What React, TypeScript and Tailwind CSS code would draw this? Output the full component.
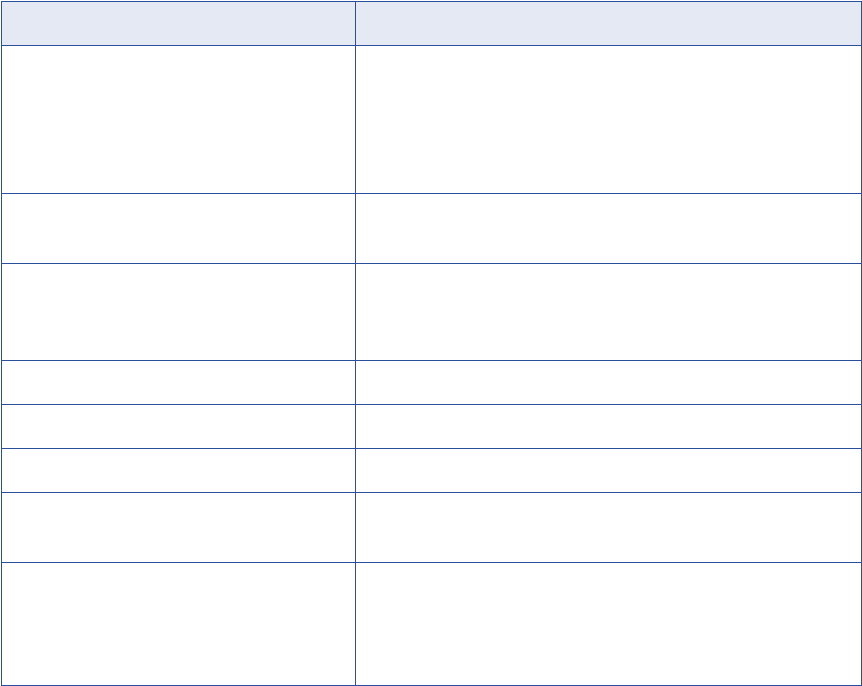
const rows = [148, 70, 97, 44, 44, 44, 70, 123];

function Row({ height, header }: { height: number; header?: boolean }) {
  return (
    <div
      className={`flex border-b border-[#2b4f9c] ${header ? 'bg-[#e4e9f4]' : 'bg-white'}`}
      style={{ height }}
    >
      <div className="w-[354px] shrink-0 border-r border-[#2b4f9c]"></div>
      <div className="w-[506px] shrink-0 border-r border-[#2b4f9c]"></div>
    </div>
  );
}

export default function App() {
  return (
    <div className="min-h-screen bg-white pt-px pl-px" style={{ fontFamily: '"Liberation Sans", Arial, sans-serif' }}>
      <div className="w-[861px] border-t border-l border-[#2b4f9c]">
        <Row height={44} header />
        {rows.map((h, i) => (
          <Row key={i} height={h} />
        ))}
      </div>
    </div>
  );
}
